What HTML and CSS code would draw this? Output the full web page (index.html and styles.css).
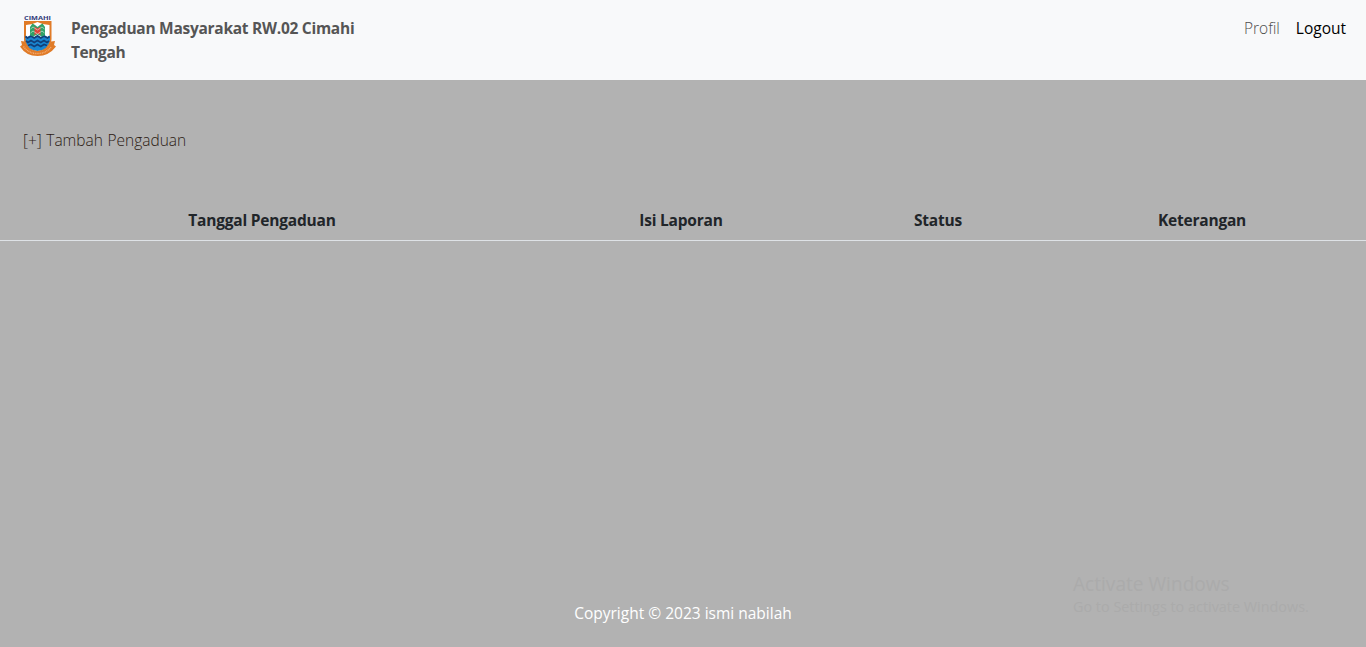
FILE: index.html
```html
<!DOCTYPE html>
<html lang="id">
<head>
<meta charset="utf-8">
<title>Pengaduan Masyarakat</title>
<link rel="stylesheet" href="styles.css">
</head>
<body>
<header class="navbar">
  <svg class="logo" width="36" height="42" viewBox="0 0 36 42">
    <text x="4" y="4.900" class="logo-name" textLength="27" lengthAdjust="spacingAndGlyphs">CIMAHI</text>
    <path d="M4 6H31.500V24Q31 35 17.500 37Q4 35 4 24Z" fill="#e07b27"/>
    <path d="M6 10Q12 10 17.500 7Q23 10 29.500 10V24Q28 34 17.500 36Q7 34 6 24Z" fill="#fff"/>
    <path d="M5.500 20.500l2 1.500 3.500-2 3.200 2 3.300-2 3.300 2 3.200-2 3.500 2 2.500-1.500V25Q28 35 17.500 36Q7 35 5.500 25z" fill="#1a86d0"/>
    <path d="M5.500 21.500l2 1.500 3.500-2 3.200 2 3.300-2 3.300 2 3.200-2 3.500 2 2-1.500M6 26l2 1.500 3-2 3.200 2 3.300-2 3.300 2 3.200-2 3 2 2-1.500M8 30.500l3-1 3.200 2 3.300-2 3.300 2 3.200-2 3 1" fill="none" stroke="#123f78" stroke-width="1.700"/>
    <path d="M10 20v-8l2.500-3.500L15 10l2.500 2L20 10l2.500-1.500L25 12v8l-3 1.500-4.500-2-4.500 2z" fill="#2fa268"/>
    <path d="M14.500 20V11.500l3 2 3-2V20l-3-1.500z" fill="#e14439"/>
    <path d="M10.500 14l2.500-2 4.500 3 4.500-3 2.500 2M10.500 18l2.500-2 4.500 3 4.500-3 2.500 2" fill="none" stroke="#e4f2e6" stroke-width=".6"/>
    <path d="M1 26l3.500.5Q7 36 17.500 36T31 26.500L35 26l-1 4 2 1.500Q29 41 17.500 41T0 31.500L2 30z" fill="#e07b27"/>
    <path d="M3.500 31.500q5 7 14 7t14-7" fill="none" stroke="#f3ad76" stroke-width="1.400" stroke-dasharray="1 .7"/>
  </svg>
  <div class="brand"><span class="brand-main">Pengaduan Masyarakat RW.02 Cimahi</span><br><span class="brand-sub">Tengah</span></div>
  <nav class="links"><a class="profil">Profil</a><a class="logout">Logout</a></nav>
</header>
<main>
  <a class="add">[+] Tambah Pengaduan</a>
  <table class="reports">
    <colgroup><col class="c1"><col class="c2"><col class="c3"><col class="c4"></colgroup>
    <thead><tr><th>Tanggal Pengaduan</th><th>Isi Laporan</th><th>Status</th><th>Keterangan</th></tr></thead>
  </table>
</main>
<footer class="footer">Copyright © 2023 ismi nabilah</footer>
<aside class="watermark"><div class="w1">Activate Windows</div><div class="w2">Go to Settings to activate Windows.</div></aside>
</body>
</html>
```
FILE: styles.css
```css
* { box-sizing: border-box; }
body {
  margin: 0;
  height: 647px;
  display: flex;
  flex-direction: column;
  overflow: hidden;
  background: #b2b2b2;
  color: #212529;
  font: 15.5px/24px "Open Sans", "Noto Sans", sans-serif;
  white-space: nowrap;
}
.navbar {
  height: 80px;
  flex: none;
  display: flex;
  align-items: flex-start;
  padding: 16px 20px 0;
  background: #f8f9fa;
}
.logo { margin-top: -1px; flex: none; overflow: visible; }
.logo-name { font: 700 5.8px "Open Sans", sans-serif; fill: #303878; }
.brand { margin-left: 15px; font-weight: 700; color: #555; }
.brand-main { letter-spacing: -0.27px; }
.brand-sub { letter-spacing: -0.4px; }
.links { margin-left: auto; display: flex; gap: 16px; color: #000; }
.profil { color: #4c4c4c; font-weight: 300; }
main { flex: 1; }
.add { display: block; margin: 48px 0 0 23px; color: #2c1b14; font-weight: 300; word-spacing: 0.5px; }
.reports { width: 100%; margin-top: 48px; table-layout: fixed; border-collapse: separate; border-spacing: 0; }
.reports th { height: 41px; padding: 8px; font-weight: 700; letter-spacing: -0.2px; text-align: center; border-bottom: 1px solid #dee2e6; }
.c1 { width: 524px; }
.c2 { width: 314px; }
.c3 { width: 200px; }
.c4 { width: 328px; }
.footer { height: 46px; text-align: center; color: #fff; }
.watermark { position: absolute; left: 1073px; top: 572px; color: #ababab; }
.w1 { font-size: 19.1px; }
.w2 { font-size: 14.4px; line-height: 22px; }
```
